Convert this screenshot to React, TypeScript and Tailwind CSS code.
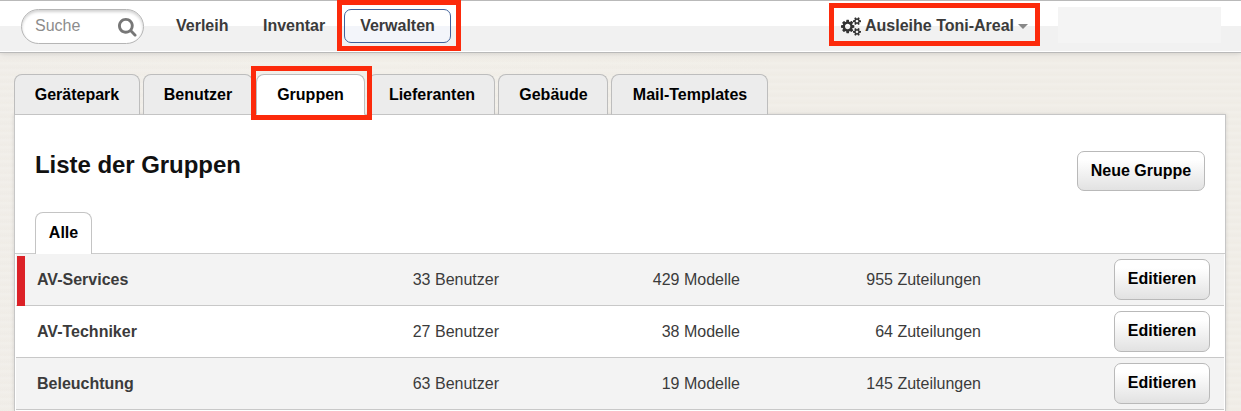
import React from "react";

const groups = [
  { name: "AV-Services", users: 33, models: 429, allocations: 955 },
  { name: "AV-Techniker", users: 27, models: 38, allocations: 64 },
  { name: "Beleuchtung", users: 63, models: 19, allocations: 145 },
];

const tabs = [
  { label: "Gerätepark", width: "w-[126px]" },
  { label: "Benutzer", width: "w-[110px]" },
  { label: "Gruppen", width: "w-[109px]", active: true },
  { label: "Lieferanten", width: "w-[127px] pl-px" },
  { label: "Gebäude", width: "w-[110px] pl-px" },
  { label: "Mail-Templates", width: "w-[157px] pl-px" },
];

function SearchIcon() {
  return (
    <svg viewBox="0 0 1792 1792" className="mt-[3px] size-5 shrink-0 fill-[#777]">
      <path d="M1152 704q0-185-131.5-316.5t-316.5-131.5-316.5 131.5-131.5 316.5 131.5 316.5 316.5 131.5 316.5-131.5 131.5-316.5zm512 832q0 52-38 90t-90 38q-54 0-90-38l-343-342q-179 124-399 124-143 0-273.5-55.5t-225-150-150-225-55.5-273.5 55.5-273.5 150-225 225-150 273.5-55.5 273.5 55.5 225 150 150 225 55.5 273.5q0 220-124 399l343 343q37 37 37 90z" />
    </svg>
  );
}

function CogsIcon() {
  const small =
    "v140q0 16-149 31-12 27-30 52 51 113 51 138 0 4-4 7-122 71-124 71-8 0-46-47t-52-68q-20 2-30 2t-30-2q-14 21-52 68t-46 47q-2 0-124-71-4-3-4-7 0-25 51-138-18-25-30-52-149-15-149-31v-140q0-16 149-31 13-29 30-52-51-113-51-138 0-4 4-7 4-2 35-20t59-34 30-16q8 0 46 46.5t52 67.5q20-2 30-2t30 2q51-71 92-112l6-2q4 0 124 70 4 3 4 7 0 25-51 138 17 23 30 52 149 15 149 31z";
  return (
    <svg viewBox="0 0 1920 1792" className="mt-[3px] h-[19px] w-[20px] shrink-0 fill-[#333]">
      <path
        fillRule="evenodd"
        d="M896 896q0-106-75-181t-181-75-181 75-75 181 75 181 181 75 181-75 75-181zm384-91v185q0 10-7 19.5t-16 10.5l-155 24q-11 35-32 76 34 48 90 115 7 11 7 20 0 12-7 19-23 30-82.5 89.5t-78.5 59.5q-11 0-21-7l-115-90q-37 19-77 31-11 108-23 155-7 24-30 24h-186q-11 0-20-7.5t-10-17.5l-23-153q-34-10-75-31l-118 89q-7 7-20 7-11 0-21-8-144-133-144-160 0-9 7-19 10-14 41-53t47-61q-23-44-35-82l-152-24q-10-1-17-9.5t-7-19.5v-185q0-10 7-19.5t16-10.5l155-24q11-35 32-76-34-48-90-115-7-11-7-20 0-12 7-20 22-30 82-89t79-59q11 0 21 7l115 90q34-18 77-32 11-108 23-154 7-24 30-24h186q11 0 20 7.5t10 17.5l23 153q34 10 75 31l118-89q8-7 20-7 11 0 21 8 144 133 144 160 0 8-7 19-12 16-42 54t-45 60q23 48 34 82l152 23q10 2 17 10.5t7 19.5z"
      />
      <path fillRule="evenodd" d={"M1664 1408q0-52-38-90t-90-38-90 38-38 90q0 53 37.5 90.5t90.5 37.5 90.5-37.5 37.5-90.5zM1920 1338" + small} />
      <path fillRule="evenodd" d={"M1664 384q0-52-38-90t-90-38-90 38-38 90q0 53 37.5 90.5t90.5 37.5 90.5-37.5 37.5-90.5zM1920 314" + small} />
    </svg>
  );
}

function Button({ children, className }: { children: React.ReactNode; className: string }) {
  return (
    <button
      className={`rounded-[7px] border border-[#b9b9b9] bg-linear-to-b from-white from-20% to-[#e2e2e2] pb-px text-center font-bold text-black ${className}`}
    >
      {children}
    </button>
  );
}

export default function App() {
  return (
    <div className="flex h-[411px] w-[1241px] flex-col overflow-hidden bg-[#efece6] bg-[repeating-linear-gradient(180deg,rgba(255,255,255,0.12)_0px,rgba(255,255,255,0)_3px,rgba(190,180,150,0.02)_5px,rgba(255,255,255,0.12)_7px),linear-gradient(100deg,#f0ede8,#f2efe9_30%,#f0ede7_60%,#f0ede7)] font-['Liberation_Sans',Arial,sans-serif] text-[16px] leading-5 text-[#3b3b3b]">
      <header className="flex h-[53px] shrink-0 border-y border-[#b9b9b9] bg-[linear-gradient(180deg,#fff_25px,#f1f1f1_25px,#f1f1f1_50px,#fff_50px)] pl-[21px] shadow-[0_1px_6px_rgba(0,0,0,0.12)]">
        <div className="mt-2 flex h-[35px] w-[123px] items-center justify-between rounded-full border border-[#b5b5b5] bg-white pr-[5px] pl-[13px] text-[#8c8c8c] shadow-[inset_0_2px_3px_rgba(0,0,0,0.18)]">
          <span className="-mt-px">Suche</span>
          <SearchIcon />
        </div>
        <nav className="mt-2 flex h-[34px] font-bold">
          <a className="ml-8 w-[55px] pt-[7px]">Verleih</a>
          <a className="ml-8 w-[66px] pt-[7px]">Inventar</a>
          <a className="relative ml-[15px] w-[107px] rounded-[7px] border border-[#41629b] bg-[linear-gradient(180deg,#fff_16px,#f3f5fa_16px)] pt-[6px] text-center">
            Verwalten
            <span className="absolute -top-[10px] -left-[8px] h-[51px] w-[124px] border-[5px] border-[#fc2a0b]" />
          </a>
        </nav>
        <div className="mt-[2px] ml-[378px] flex h-[43px] w-[211px] items-center border-[5px] border-[#fc2a0b] pl-[7px] font-bold">
          <CogsIcon />
          <span className="mt-[2px] ml-[4px] whitespace-nowrap">Ausleihe Toni-Areal</span>
          <span className="mt-[4px] ml-[4px] border-x-[5px] border-t-[5px] border-x-transparent border-t-[#888]" />
        </div>
        <div className="mt-[6px] ml-[18px] h-[36px] w-[163px] bg-[#f4f4f4]" />
      </header>

      <main className="mt-[21px] ml-[14px] flex w-[1212px] grow flex-col">
        <div className="flex h-[41px] gap-[3px] font-bold text-black">
          {tabs.map((tab) => (
            <div
              key={tab.label}
              className={`relative shrink-0 rounded-t-[8px] border border-[#bdbdbd] pt-[10px] text-center ${tab.width} ${
                tab.active ? "z-10 border-b-white bg-white" : "border-b-[#c4c4c4] bg-[#ececec]"
              }`}
            >
              {tab.label}
              {tab.active && (
                <span className="absolute -top-[9px] -left-[6px] h-[54px] w-[121px] border-[5px] border-[#fc2a0b]" />
              )}
            </div>
          ))}
        </div>
        <section className="-mt-px grow border border-b-0 border-[#c6c6c6] bg-white shadow-[0_0_4px_rgba(0,0,0,0.12)]">
          <div className="flex h-[97px] items-start justify-between pr-[20px] pl-5">
            <h1 className="mt-[35px] text-[24px] leading-[30px] font-bold tracking-[-0.05px] text-[#111]">Liste der Gruppen</h1>
            <Button className="mt-9 h-10 w-[128px]">Neue Gruppe</Button>
          </div>
          <div className="flex h-[42px] border-b border-[#ccc] pl-5">
            <div className="h-[42px] w-[57px] rounded-t-[8px] border border-b-0 border-[#c4c4c4] bg-white pt-[10px] text-center font-bold text-black">
              Alle
            </div>
          </div>
          {groups.map((group, i) => (
            <div
              key={group.name}
              className={`mx-px flex h-[52px] items-center border-b border-[#c8c8c8] pr-[14px] ${i % 2 ? "bg-white" : "bg-[#f3f3f3]"}`}
            >
              <span className={`mt-[3px] ml-px h-[50px] w-2 ${i === 0 ? "bg-[#dc2127]" : ""}`} />
              <span className="w-[300px] pl-3 font-bold">{group.name}</span>
              <span className="w-[174px] text-right">{group.users} Benutzer</span>
              <span className="w-[241px] text-right">{group.models} Modelle</span>
              <span className="w-[241px] text-right">{group.allocations} Zuteilungen</span>
              <Button className="mb-px ml-auto h-[41px] w-24">Editieren</Button>
            </div>
          ))}
        </section>
      </main>
    </div>
  );
}
